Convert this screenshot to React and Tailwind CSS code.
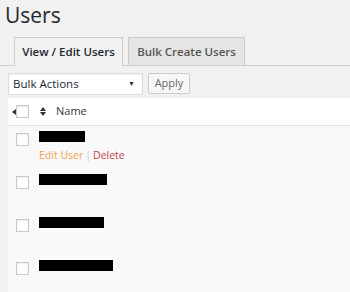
const users = [
  { bar: 46, actions: true },
  { bar: 68 },
  { bar: 65 },
  { bar: 74 },
];

function Checkbox() {
  return <span className="block w-[13px] h-[13px] border border-[#c8c8c8] bg-white shadow-[inset_0_1px_2px_rgba(0,0,0,0.08)]" />;
}

export default function App() {
  return (
    <div className="w-[350px] h-[292px] overflow-hidden bg-[#f1f1f1] text-[#23282d] font-['Open_Sans','Noto_Sans',sans-serif]">
      <h1 className="pl-[5px] pt-[1px] text-[21px] leading-[28px] font-normal">Users</h1>

      <div className="mt-[8px] flex items-end gap-[5px] pl-[14px] border-b border-[#cccccc] h-[29px]">
        <div className="h-[29px] -mb-px w-[109px] flex items-center justify-center border border-b-0 border-[#cccccc] bg-[#f1f1f1] text-[11.5px] font-semibold">
          View / Edit Users
        </div>
        <div className="h-[28px] w-[117px] flex items-center justify-center border border-b-0 border-[#cccccc] bg-[#e5e5e5] text-[11.5px] font-semibold text-[#555]">
          Bulk Create Users
        </div>
      </div>

      <div className="flex gap-[5px] pl-[8px] mt-[7px]">
        <div className="w-[135px] h-[22px] bg-white border border-[#dddddd] flex items-center justify-between pl-[4px] pr-[7px] text-[11.5px] shadow-[inset_0_1px_2px_rgba(0,0,0,0.07)]">
          <span>Bulk Actions</span>
          <span className="text-[7px] text-[#333]">▼</span>
        </div>
        <div className="w-[42px] h-[21px] bg-[#f7f7f7] border border-[#cccccc] rounded-[2px] flex items-center justify-center text-[11px] text-[#666]">
          Apply
        </div>
      </div>

      <div className="ml-[8px] mt-[3px] bg-[#f9f9f9]">
        <div className="h-[28px] bg-white border-b border-[#e1e1e1] flex items-center">
          <svg width="8" height="8" viewBox="0 0 8 8" className="ml-[3px] -mr-[3px]">
            <path d="M1 4 L5 1 L5 7 Z" fill="#333" />
          </svg>
          <Checkbox />
          <svg width="6" height="9" viewBox="0 0 6 9" className="ml-[11px]">
            <path d="M3 0 L6 4 L0 4 Z M0 5 L6 5 L3 9 Z" fill="#333" />
          </svg>
          <span className="ml-[10px] text-[11px] text-[#32373c]">Name</span>
        </div>

        {users.map((u, i) => (
          <div key={i} className="h-[43px] flex items-start pt-[7px] pl-[8px]">
            <Checkbox />
            <div className="ml-[10px]">
              <div className="h-[11px] bg-black -mt-[2px]" style={{ width: u.bar }} />
              {u.actions && (
                <div className="mt-[6px] text-[10.5px] leading-[14px]">
                  <span className="text-[#f0a050]">Edit User</span>
                  <span className="text-[#ccc] mx-[2px]">|</span>
                  <span className="text-[#c0404d]">Delete</span>
                </div>
              )}
            </div>
          </div>
        ))}
      </div>
    </div>
  );
}
